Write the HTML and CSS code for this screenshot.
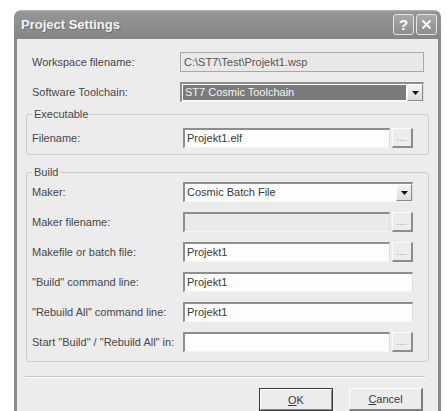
FILE: index.html
```html
<!DOCTYPE html>
<html lang="en">
<head>
<meta charset="utf-8">
<title>Project Settings</title>
<link rel="stylesheet" href="styles.css">
</head>
<body>
<div class="window">
  <div class="titlebar">
    <span class="title">Project Settings</span>
    <div class="caption-buttons">
      <span class="cap-btn">?</span>
      <span class="cap-btn">
        <svg width="11" height="11" viewBox="0 0 11 11"><path d="M1.5 1.5 L9.5 9.5 M9.5 1.5 L1.5 9.5" stroke="#fff" stroke-width="1.8" fill="none"/></svg>
      </span>
    </div>
  </div>

  <div class="client">
    <div class="top-rows">
      <div class="row top-row">
        <label class="lbl">Workspace filename:</label>
        <div class="field readonly">C:\ST7\Test\Projekt1.wsp</div>
      </div>
      <div class="row top-row">
        <label class="lbl">Software Toolchain:</label>
        <div class="field combo">
          <span class="combo-text selected">ST7 Cosmic Toolchain</span>
          <span class="combo-arrow"><svg width="7" height="4" viewBox="0 0 7 4"><path d="M0 0 H7 L3.5 4 Z" fill="#111"/></svg></span>
        </div>
      </div>
    </div>

    <fieldset class="group group-exe">
      <legend>Executable</legend>
      <div class="group-rows">
        <div class="row">
          <label class="lbl">Filename:</label>
          <div class="field">Projekt1.elf</div>
          <span class="browse">....</span>
        </div>
      </div>
    </fieldset>

    <fieldset class="group group-build">
      <legend>Build</legend>
      <div class="group-rows">
        <div class="row">
          <label class="lbl">Maker:</label>
          <div class="field combo">
            <span class="combo-text">Cosmic Batch File</span>
            <span class="combo-arrow"><svg width="7" height="4" viewBox="0 0 7 4"><path d="M0 0 H7 L3.5 4 Z" fill="#111"/></svg></span>
          </div>
        </div>
        <div class="row">
          <label class="lbl">Maker filename:</label>
          <div class="field disabled"></div>
          <span class="browse">....</span>
        </div>
        <div class="row">
          <label class="lbl">Makefile or batch file:</label>
          <div class="field">Projekt1</div>
          <span class="browse">....</span>
        </div>
        <div class="row">
          <label class="lbl">"Build" command line:</label>
          <div class="field">Projekt1</div>
        </div>
        <div class="row">
          <label class="lbl">"Rebuild All" command line:</label>
          <div class="field">Projekt1</div>
        </div>
        <div class="row">
          <label class="lbl">Start "Build" / "Rebuild All" in:</label>
          <div class="field"></div>
          <span class="browse">....</span>
        </div>
      </div>
    </fieldset>

    <div class="separator"></div>

    <div class="actions">
      <button class="btn btn-default"><u>O</u>K</button>
      <button class="btn"><u>C</u>ancel</button>
    </div>
  </div>
</div>
</body>
</html>
```
FILE: styles.css
```css
html, body {
  margin: 0;
  background: #ffffff;
}

body {
  width: 447px;
  height: 411px;
  overflow: hidden;
  font-family: "Liberation Sans", Arial, sans-serif;
  font-size: 11px;
  color: #474747;
}

/* dialog window */
.window {
  margin: 10px 0 0 14px;
  width: 427px;
}

.titlebar {
  box-sizing: border-box;
  height: 29px;
  display: flex;
  align-items: center;
  justify-content: space-between;
  padding: 0 4px 0 7px;
  border-radius: 7px 7px 0 0;
  background: linear-gradient(#b6b6b6 0, #959595 2px, #8e8e8e 55%, #868686 100%);
}

.title {
  font-weight: bold;
  font-size: 13px;
  color: #f4f4f4;
  text-shadow: 1px 1px 0 #6e6e6e;
}

.caption-buttons {
  display: flex;
  gap: 2px;
}

.cap-btn {
  box-sizing: border-box;
  width: 21px;
  height: 21px;
  display: flex;
  align-items: center;
  justify-content: center;
  border: 1px solid #e4e4e4;
  border-radius: 3px;
  background: linear-gradient(#a9a9a9, #8e8e8e);
  color: #ffffff;
  font-weight: bold;
  font-size: 15px;
}

.client {
  background: #ececec;
  border-left: 3px solid #8a8a8a;
  border-right: 3px solid #8a8a8a;
  padding: 13px 9px 12px;
}

/* form rows */
.top-rows,
.group-rows {
  display: flex;
  flex-direction: column;
  gap: 10px;
}

.row {
  display: flex;
  align-items: center;
  height: 20px;
}

.top-row {
  padding: 0 5px 0 6px;
}

.lbl {
  flex: none;
  width: 148px;
  white-space: nowrap;
}

.group .lbl {
  width: 151px;
}

.field {
  flex: 1;
  box-sizing: border-box;
  height: 20px;
  border-style: solid;
  border-width: 2px 1px 1px 2px;
  border-color: #8e8e8e #dcdcdc #f4f4f4 #8e8e8e;
  background: #fdfdfd;
  padding-left: 2px;
  line-height: 17px;
  white-space: nowrap;
  overflow: hidden;
  color: #3a3a3a;
}

.field.readonly {
  border: 1px solid #a8a8a8;
  background: #e8e8e8;
  padding-left: 3px;
  line-height: 18px;
  color: #555;
}

.field.disabled {
  background: #eaeaea;
}

.combo {
  display: flex;
  padding: 0;
}

.combo-text {
  flex: 1;
  padding-left: 2px;
}

.combo-text.selected {
  margin: 1px;
  background: #7b7b7b;
  color: #f3f3f3;
  line-height: 15px;
}

.combo-arrow {
  flex: none;
  box-sizing: border-box;
  width: 16px;
  display: flex;
  align-items: center;
  justify-content: center;
  border-style: solid;
  border-width: 1px;
  border-color: #ffffff #8a8a8a #8a8a8a #ffffff;
  background: linear-gradient(#f4f4f4, #dcdcdc);
}

.browse {
  flex: none;
  box-sizing: border-box;
  width: 21px;
  height: 20px;
  margin-left: 2px;
  border-style: solid;
  border-width: 1px 2px 2px 1px;
  border-color: #fbfbfb #8c8c8c #8c8c8c #fbfbfb;
  background: #ececec;
  color: #7a7a7a;
  font-size: 8px;
  letter-spacing: 0.5px;
  line-height: 20px;
  text-align: center;
}

/* group boxes */
.group {
  margin: 0;
  min-width: 0;
  border: 1px solid #cdcdcd;
  border-radius: 3px;
  padding: 7px 15px 6px 5px;
}

.group legend {
  padding: 0 2px;
  line-height: 13px;
  font-size: 11px;
}

.group-exe {
  margin-top: 6px;
}

.group-build {
  margin-top: 11px;
  padding-top: 3px;
  padding-bottom: 9px;
}

.separator {
  margin: 14px 4px 0 -1px;
  border-top: 1px solid #c4c4c4;
  border-bottom: 1px solid #fdfdfd;
}

/* dialog buttons */
.actions {
  display: flex;
  justify-content: flex-end;
  gap: 16px;
  margin-top: 10px;
  padding-right: 6px;
}

.btn {
  box-sizing: border-box;
  width: 74px;
  height: 23px;
  margin: 0;
  padding: 0;
  font-family: inherit;
  font-size: 11px;
  color: #3a3a3a;
  background: #ececec;
  border-style: solid;
  border-width: 1px 2px 2px 1px;
  border-color: #fdfdfd #7e7e7e #7e7e7e #fdfdfd;
}

.btn-default {
  border: 1px solid #3a3a3a;
  box-shadow: inset 1px 1px 0 #fdfdfd, inset -1px -1px 0 #8a8a8a;
}
```
